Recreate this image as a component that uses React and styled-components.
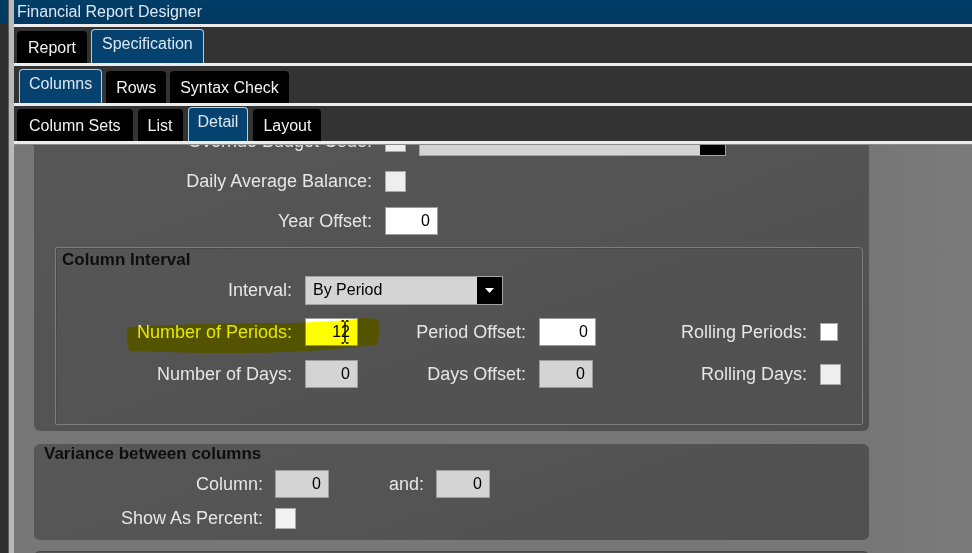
import React, { useLayoutEffect, useRef } from 'react';
import styled, { createGlobalStyle } from 'styled-components';

const GlobalStyle = createGlobalStyle`
  html, body {
    margin: 0;
    width: 972px;
    height: 553px;
    overflow: hidden;
    background: #787878;
    font-family: "Liberation Sans", Arial, sans-serif;
  }
  #root {
    height: 100%;
  }
`;

function Checkbox({ size = 21, tone = '#eeeeee' }) {
  return <CheckBox $size={size} $tone={tone} />;
}

function Dropdown({ width, value }) {
  return (
    <Select $width={width}>
      <SelectText>{value}</SelectText>
      <SelectButton>
        <svg width="9" height="5" viewBox="0 0 9 5">
          <path d="M0 0 L9 0 L4.5 5 Z" fill="#fff" />
        </svg>
      </SelectButton>
    </Select>
  );
}

function App() {
  const scrollRef = useRef(null);

  // the detail view is scrolled down a little
  useLayoutEffect(() => {
    if (scrollRef.current) scrollRef.current.scrollTop = 30;
  }, []);

  return (
    <>
      <GlobalStyle />
      <Window>
        <Rail />
        <Splitter />
        <Main>
          <TitleBar>Financial Report Designer</TitleBar>

          <TabStrip $height={36} $pad={3}>
            <Tab $px={10}>Report</Tab>
            <Tab $px={10} $active>Specification</Tab>
          </TabStrip>
          <TabStrip $height={37} $pad={5}>
            <Tab $active>Columns</Tab>
            <Tab>Rows</Tab>
            <Tab>Syntax Check</Tab>
          </TabStrip>
          <TabStrip $height={35} $pad={3} $gap={5}>
            <Tab $px={11}>Column Sets</Tab>
            <Tab>List</Tab>
            <Tab $active>Detail</Tab>
            <Tab>Layout</Tab>
          </TabStrip>

          <Content>
            <Scroller ref={scrollRef}>
              <Panel $radius="0 0 6px 6px">
                <FormRow>
                  <Label $width={338}>Override Budget Code:</Label>
                  <Checkbox />
                  <Dropdown width={307} value="" />
                </FormRow>
                <FormRow>
                  <Label $width={338}>Daily Average Balance:</Label>
                  <Checkbox />
                </FormRow>
                <FormRow>
                  <Label $width={338}>Year Offset:</Label>
                  <ValueBox $width={53}>0</ValueBox>
                </FormRow>

                <GroupBox>
                  <GroupTitle>Column Interval</GroupTitle>
                  <IntervalGrid>
                    <GridLabel>Interval:</GridLabel>
                    <SpanCell>
                      <Dropdown width={198} value="By Period" />
                    </SpanCell>
                    <span />
                    <span />
                    <span />

                    <GridLabel>Number of Periods:</GridLabel>
                    <ValueBox $width={53}>
                      12
                      <Cursor width="8" height="24" viewBox="0 0 8 24">
                        <path d="M0.5 1 H3 M5 1 H7.5 M4 1.5 V22.5 M0.5 23 H3 M5 23 H7.5" stroke="#000" strokeWidth="1.4" fill="none" />
                      </Cursor>
                    </ValueBox>
                    <GridLabel>Period Offset:</GridLabel>
                    <ValueBox $width={57}>0</ValueBox>
                    <GridLabel>Rolling Periods:</GridLabel>
                    <Checkbox size={18} tone="#ffffff" />

                    <GridLabel>Number of Days:</GridLabel>
                    <ValueBox $width={53} $tone="#d4d4d4">0</ValueBox>
                    <GridLabel>Days Offset:</GridLabel>
                    <ValueBox $width={54} $tone="#d4d4d4">0</ValueBox>
                    <GridLabel>Rolling Days:</GridLabel>
                    <Checkbox />
                  </IntervalGrid>

                  <Highlighter width="254" height="38" viewBox="0 0 254 38">
                    <path
                      d="M2 9 C 40 6, 110 5, 170 5 C 190 4, 215 3, 238 0 L 252 1 C 254 10, 253 20, 251 27 C 220 30, 190 33, 160 34 C 110 36, 60 35, 4 33 C 0 25, 0 16, 2 9 Z"
                      fill="#ffff00"
                    />
                  </Highlighter>
                </GroupBox>
              </Panel>

              <Panel $radius="6px" $gapTop={13} $pad="1px 0 8px">
                <PanelTitle>Variance between columns</PanelTitle>
                <VarianceGrid>
                  <GridLabel>Column:</GridLabel>
                  <ValueBox $width={54} $tone="#d4d4d4">0</ValueBox>
                  <GridLabel>and:</GridLabel>
                  <ValueBox $width={54} $tone="#d4d4d4">0</ValueBox>

                  <GridLabel>Show As Percent:</GridLabel>
                  <Checkbox tone="#f2f2f2" />
                  <span />
                  <span />
                </VarianceGrid>
              </Panel>

              <Panel $radius="6px 6px 0 0" $gapTop={11} $pad="0">
                <EmptyBody />
              </Panel>
            </Scroller>
            <RightArea />
          </Content>
        </Main>
      </Window>
    </>
  );
}

const Window = styled.div`
  display: flex;
  height: 553px;
  width: 972px;
`;
const Rail = styled.div`
  width: 8px;
  flex-shrink: 0;
  background: linear-gradient(#003a62 0 24px, #2f2f2f 24px);
`;
const Splitter = styled.div`
  width: 5px;
  flex-shrink: 0;
  background: #b9b9b9;
  border-left: 1px solid #5c5c5c;
`;
const Main = styled.div`
  flex: 1;
  min-width: 0;
  display: flex;
  flex-direction: column;
`;
const TitleBar = styled.div`
  height: 24px;
  line-height: 23px;
  padding-left: 3px;
  background: linear-gradient(#003e68, #003860);
  color: #dfe8f1;
  font-size: 16px;
  border-bottom: 3px solid #ececec;
  box-shadow: 0 1px 0 #8a8a8a;
  position: relative;
  z-index: 1;
`;
const TabStrip = styled.div`
  height: ${(p) => p.$height}px;
  flex-shrink: 0;
  display: flex;
  align-items: flex-end;
  gap: ${(p) => p.$gap || 4}px;
  padding-left: ${(p) => p.$pad}px;
  background: #333333;
  border-bottom: 3px solid #ececec;
  box-shadow: 0 1px 0 #8a8a8a;
  position: relative;
  z-index: 1;
`;
const Tab = styled.div`
  height: ${(p) => (p.$active ? 34 : 32)}px;
  box-sizing: border-box;
  padding: 0 ${(p) => p.$px || 9}px ${(p) => (p.$active ? 5 : 0)}px;
  display: flex;
  align-items: center;
  font-size: 16px;
  color: ${(p) => (p.$active ? '#dce7f1' : '#f2f2f2')};
  background: ${(p) => (p.$active ? '#064270' : '#000000')};
  border: 1px solid ${(p) => (p.$active ? '#a9d0ee' : '#000000')};
  border-bottom: none;
  border-radius: 4px 4px 0 0;
`;
const Content = styled.div`
  flex: 1;
  min-height: 0;
  display: flex;
  padding-left: 20px;
  background: #777777;
`;
const Scroller = styled.div`
  width: 835px;
  flex-shrink: 0;
  overflow: hidden;
  display: flex;
  flex-direction: column;
`;
const RightArea = styled.div`
  flex: 1;
  background: linear-gradient(90deg, #767676, #7b7b7b);
`;
const Panel = styled.div`
  flex-shrink: 0;
  margin-top: ${(p) => p.$gapTop || 0}px;
  padding: ${(p) => p.$pad || '12px 6px 6px 0'};
  border-radius: ${(p) => p.$radius};
  background: linear-gradient(160deg, #575757, #505050);
  display: flex;
  flex-direction: column;
`;
const FormRow = styled.div`
  height: 30px;
  display: flex;
  align-items: center;
  gap: 13px;
  margin-bottom: 10px;
`;
const Label = styled.span`
  width: ${(p) => p.$width}px;
  text-align: right;
  font-size: 18px;
  color: #e6e6e6;
  white-space: nowrap;
`;
const GridLabel = styled.span`
  justify-self: end;
  font-size: 18px;
  color: #e6e6e6;
  white-space: nowrap;
`;
const CheckBox = styled.div`
  width: ${(p) => p.$size}px;
  height: ${(p) => p.$size}px;
  box-sizing: border-box;
  background: ${(p) => p.$tone};
  border: 1px solid #a8a8a8;
`;
const ValueBox = styled.div`
  position: relative;
  width: ${(p) => p.$width}px;
  height: 28px;
  box-sizing: border-box;
  padding-right: 7px;
  display: flex;
  align-items: center;
  justify-content: flex-end;
  background: ${(p) => p.$tone || '#ffffff'};
  border: 1px solid #9c9c9c;
  font-size: 16px;
  color: #000;
`;
const Cursor = styled.svg`
  position: absolute;
  left: 35px;
  top: 1px;
  z-index: 3;
`;
const Select = styled.div`
  width: ${(p) => p.$width}px;
  height: 29px;
  box-sizing: border-box;
  display: flex;
  background: #d4d4d4;
  border: 1px solid #a4a4a4;
`;
const SelectText = styled.span`
  flex: 1;
  padding-left: 7px;
  display: flex;
  align-items: center;
  font-size: 16px;
  color: #000;
`;
const SelectButton = styled.span`
  width: 25px;
  background: #000;
  display: flex;
  align-items: center;
  justify-content: center;
`;
const GroupBox = styled.div`
  position: relative;
  margin: 1px 0 0 21px;
  height: 178px;
  box-sizing: border-box;
  padding-top: 3px;
  border: 1px solid #7d7d7d;
  border-radius: 2px 4px 2px 2px;
  box-shadow: inset 1px 1px 0 #4a4a4a;
`;
const GroupTitle = styled.div`
  padding-left: 6px;
  height: 18px;
  line-height: 18px;
  font-size: 17px;
  font-weight: bold;
  color: #0e0e0e;
`;
const IntervalGrid = styled.div`
  display: grid;
  grid-template-columns: 236px 53px 155px 57px 198px 22px;
  grid-template-rows: 30px 30px 30px;
  column-gap: 13px;
  row-gap: 12px;
  align-items: center;
  margin-top: 6px;
`;
const SpanCell = styled.div`
  grid-column: 2 / 4;
`;
const Highlighter = styled.svg`
  position: absolute;
  left: 70px;
  top: 70px;
  mix-blend-mode: multiply;
  pointer-events: none;
  z-index: 2;
`;
const PanelTitle = styled.div`
  padding-left: 10px;
  height: 17px;
  line-height: 17px;
  font-size: 17px;
  font-weight: bold;
  color: #0e0e0e;
`;
const VarianceGrid = styled.div`
  display: grid;
  grid-template-columns: 229px 54px 83px 54px;
  grid-template-rows: 28px 28px;
  column-gap: 12px;
  row-gap: 6px;
  align-items: center;
  margin-top: 8px;
`;
const EmptyBody = styled.div`
  height: 80px;
  border-top: 1px solid #4a4a4a;
  border-radius: 6px 6px 0 0;
`;

export default App;
